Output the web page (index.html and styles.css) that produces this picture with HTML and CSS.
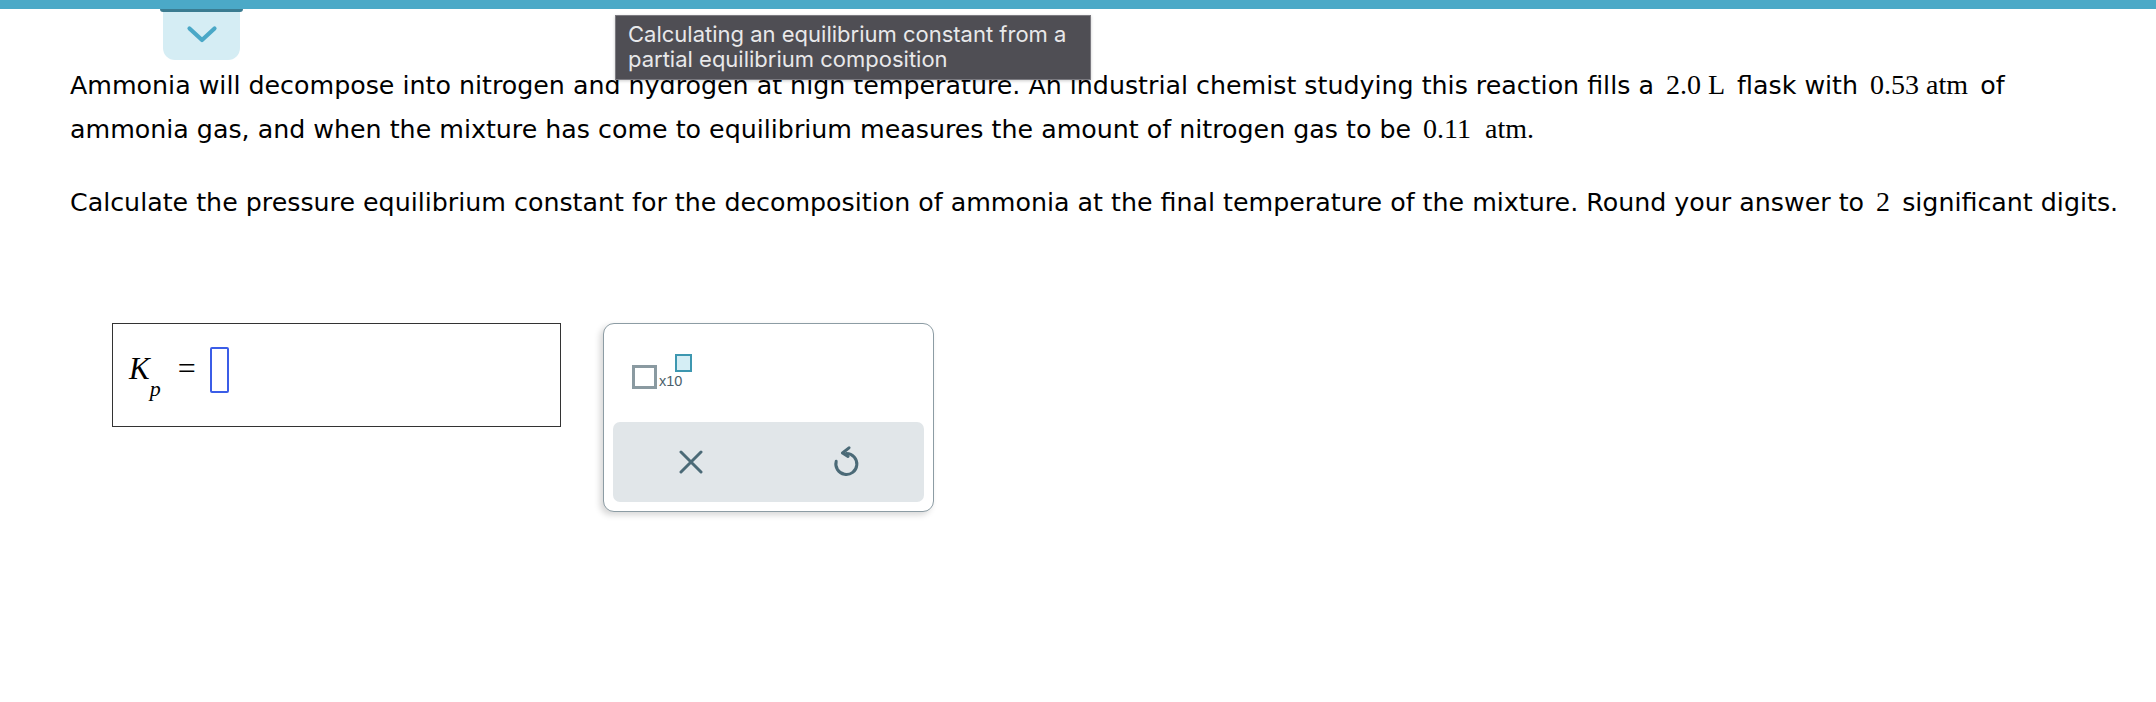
FILE: index.html
```html
<!DOCTYPE html>
<html lang="en">
<head>
<meta charset="utf-8">
<title>Calculating an equilibrium constant</title>
<link rel="stylesheet" href="styles.css">
</head>
<body>
<header class="topbar">
  <button class="tab" aria-label="Expand">
    <svg width="32" height="20" viewBox="0 0 32 20"><polyline points="3.5,3.5 16,15 28.5,3.5" fill="none" stroke="#4aa8c7" stroke-width="4.2" stroke-linecap="round" stroke-linejoin="round"/></svg>
  </button>
</header>
<div class="tooltip">Calculating an equilibrium constant from a<br>partial equilibrium composition</div>
<main class="content">
  <p class="q">Ammonia will decompose into nitrogen and hydrogen at high temperature. An industrial chemist studying this reaction fills a <span class="m">2.0&nbsp;L</span> flask with <span class="m">0.53&nbsp;atm</span> of ammonia gas, and when the mixture has come to equilibrium measures the amount of nitrogen gas to be <span class="m">0.11&nbsp;&nbsp;atm.</span></p>
  <p class="q q2">Calculate the pressure equilibrium constant for the decomposition of ammonia at the final temperature of the mixture. Round your answer to <span class="m">2</span> significant digits.</p>
  <div class="answer-row">
    <div class="answer">
      <span class="k">K<span class="sub">p</span></span>
      <span class="eq">=</span>
      <span class="slot"></span>
    </div>
    <div class="pad">
      <div class="pad-top">
        <div class="exp">
          <span class="base"></span>
          <span class="x10">x10</span>
          <span class="sup"></span>
        </div>
      </div>
      <div class="pad-bar">
        <button class="pbtn" aria-label="Clear">
          <svg width="24" height="24" viewBox="0 0 24 24"><path d="M2 2L22 22M22 2L2 22" fill="none" stroke="#4b6a77" stroke-width="3" stroke-linecap="round"/></svg>
        </button>
        <button class="pbtn" aria-label="Undo">
          <svg width="28" height="32" viewBox="0 0 28 32"><path d="M14.5 7.5A10.5 10.5 0 1 1 4.2 15.3" fill="none" stroke="#4b6a77" stroke-width="3" stroke-linecap="round"/><polyline points="17,1.8 10.5,7 16,10.5" fill="none" stroke="#4b6a77" stroke-width="3" stroke-linecap="round" stroke-linejoin="round"/></svg>
        </button>
      </div>
    </div>
  </div>
</main>
</body>
</html>
```
FILE: styles.css
```css
html, body {
  margin: 0;
  padding: 0;
  background: #fff;
}
body {
  font-family: "DejaVu Sans", Verdana, sans-serif;
  color: #000;
  width: 2156px;
  height: 702px;
  overflow: hidden;
  position: relative;
}
.topbar {
  height: 9px;
  background: #4ba9c7;
  position: relative;
}
.tab {
  position: absolute;
  left: 163px;
  top: 9px;
  width: 77px;
  height: 51px;
  margin: 0;
  border: none;
  background: #d5edf4;
  border-radius: 0 0 12px 12px;
  display: flex;
  justify-content: center;
  align-items: flex-start;
  padding: 16px 0 0;
  box-sizing: border-box;
}
.tab::before {
  content: "";
  position: absolute;
  left: -3px;
  right: -3px;
  top: 0;
  height: 3px;
  background: #3b7c91;
  border-radius: 0 0 3px 3px;
}
.tooltip {
  position: absolute;
  left: 615px;
  top: 15px;
  width: 476px;
  height: 65px;
  box-sizing: border-box;
  background: #4f4e54;
  border: 1px solid #7b7a80;
  color: #e8e8ea;
  font-family: Inter, "Liberation Sans", sans-serif;
  font-size: 22px;
  line-height: 25px;
  padding: 6px 0 0 12px;
  z-index: 5;
  box-shadow: 0 1px 3px rgba(0,0,0,0.2);
}
.content {
  padding: 55px 0 0 70px;
}
.q {
  margin: 0;
  width: 2056px;
  font-size: 25.3px;
  line-height: 44px;
}
.q2 {
  margin-top: 29px;
}
.m {
  font-family: "Liberation Serif", "Times New Roman", serif;
  font-size: 28px;
  line-height: 1;
  margin: 0 4px;
}
.answer-row {
  display: flex;
  align-items: flex-start;
  gap: 42px;
  margin: 98px 0 0 42px;
}
.answer {
  width: 449px;
  height: 104px;
  box-sizing: border-box;
  border: 1px solid #333;
  padding: 23px 0 0 16px;
  display: flex;
  align-items: flex-start;
}
.k {
  font-family: "Liberation Serif", "Times New Roman", serif;
  font-style: italic;
  font-size: 31px;
  line-height: 31px;
  margin-top: 6px;
}
.sub {
  font-size: 22px;
  vertical-align: -17px;
  margin-left: 0;
}
.eq {
  font-family: "Liberation Serif", "Times New Roman", serif;
  font-size: 32px;
  line-height: 32px;
  margin: 5px 0 0 17px;
}
.slot {
  width: 19px;
  height: 46px;
  box-sizing: border-box;
  border: 2px solid #3b5de7;
  border-radius: 2px;
  margin-left: 14px;
}
.pad {
  width: 331px;
  height: 189px;
  box-sizing: border-box;
  border: 1px solid #8c9ca4;
  border-radius: 11px;
  box-shadow: -3px 3px 6px rgba(0, 0, 0, 0.16);
  padding: 0 9px 9px;
  display: flex;
  flex-direction: column;
  background: #fff;
}
.pad-top {
  flex: 1;
}
.exp {
  display: flex;
  align-items: flex-start;
  margin: 30px 0 0 19px;
}
.base {
  width: 25px;
  height: 24px;
  box-sizing: border-box;
  border: 3px solid #8a9aa1;
  margin-top: 11px;
}
.x10 {
  font-family: "Liberation Sans", Arial, sans-serif;
  font-size: 14.5px;
  line-height: 15px;
  color: #4b5f6b;
  margin: 20px 0 0 2px;
}
.sup {
  width: 17px;
  height: 18px;
  box-sizing: border-box;
  border: 2px solid #3d97b0;
  background: #d5eef5;
  margin-left: -7px;
}
.pad-bar {
  height: 80px;
  background: #e1e6e9;
  border-radius: 7px;
  display: grid;
  grid-template-columns: 1fr 1fr;
}
.pbtn {
  border: none;
  background: transparent;
  margin: 0;
  padding: 0;
  display: flex;
  align-items: center;
  justify-content: center;
}
```
